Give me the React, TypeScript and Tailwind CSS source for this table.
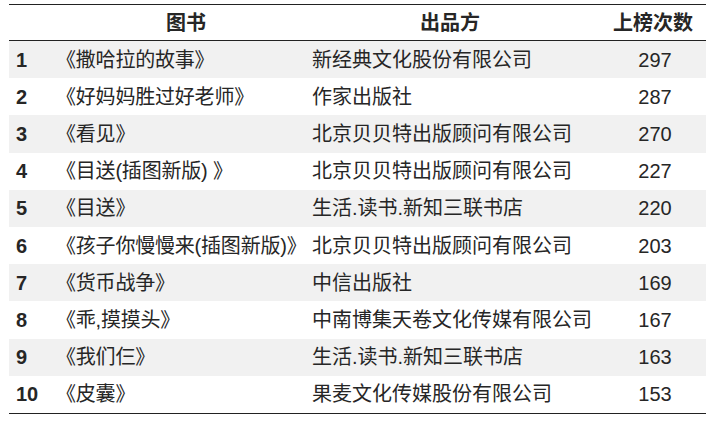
import React from "react";

const rows = [
  ["1", "《撒哈拉的故事》", "新经典文化股份有限公司", "297"],
  ["2", "《好妈妈胜过好老师》", "作家出版社", "287"],
  ["3", "《看见》", "北京贝贝特出版顾问有限公司", "270"],
  ["4", "《目送(插图新版) 》", "北京贝贝特出版顾问有限公司", "227"],
  ["5", "《目送》", "生活.读书.新知三联书店", "220"],
  ["6", "《孩子你慢慢来(插图新版)》", "北京贝贝特出版顾问有限公司", "203"],
  ["7", "《货币战争》", "中信出版社", "169"],
  ["8", "《乖,摸摸头》", "中南博集天卷文化传媒有限公司", "167"],
  ["9", "《我们仨》", "生活.读书.新知三联书店", "163"],
  ["10", "《皮囊》", "果麦文化传媒股份有限公司", "153"],
];

export default function App() {
  return (
    <div
      className="w-[715px] h-[435px] bg-white pt-[4px] pl-[9px] text-[20px] text-[#262626]"
      style={{ fontFamily: '"Liberation Sans", "Noto Sans CJK SC", sans-serif' }}
    >
      <div className="w-[697px] border-t-[1.5px] border-b-[1.5px] border-[#222]">
        {/* 表头 */}
        <div className="grid grid-cols-[47px_256px_288px_106px] h-[36px] items-center font-bold border-b-[1.5px] border-[#222]">
          <div />
          <div className="text-center pl-[4px]">图书</div>
          <div className="text-center pr-[12px]">出品方</div>
          <div className="text-center">上榜次数</div>
        </div>
        {/* 数据行 */}
        {rows.map(([n, book, pub, count], i) => (
          <div
            key={n}
            className={
              "grid grid-cols-[47px_256px_288px_106px] h-[37.2px] items-center whitespace-nowrap " +
              (i % 2 === 0 ? "bg-[#f1f1f1]" : "bg-white")
            }
          >
            <div className="pl-[7px] font-bold">{n}</div>
            <div className="tracking-[-0.2px]">{book}</div>
            <div>{pub}</div>
            <div className="text-center pl-[4px]">{count}</div>
          </div>
        ))}
      </div>
    </div>
  );
}
